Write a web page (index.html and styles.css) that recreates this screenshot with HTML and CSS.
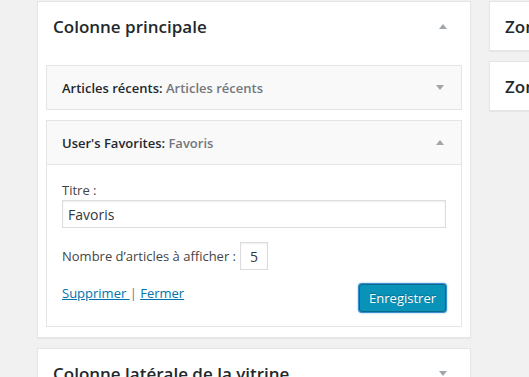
FILE: index.html
```html
<!DOCTYPE html>
<html lang="fr">
<head>
  <meta charset="UTF-8" />
  <title>Widgets</title>
  <link rel="stylesheet" href="styles.css">
</head>
<body>

  <!-- Left column: widget areas -->
  <div class="col-left">
    <div class="sidebar-box">
      <div class="sidebar-name">
        <h2>Colonne principale</h2>
        <span class="arrow up"></span>
      </div>

      <div class="widget">
        <div class="widget-top">
          <span class="widget-title"><strong>Articles récents:</strong> Articles récents</span>
          <span class="arrow down"></span>
        </div>
      </div>

      <div class="widget open">
        <div class="widget-top">
          <span class="widget-title"><strong>User's Favorites:</strong> Favoris</span>
          <span class="arrow up"></span>
        </div>
        <div class="widget-inside">
          <label class="field-label">Titre :</label>
          <input class="text-input" type="text" value="Favoris">
          <div class="number-row">
            <label>Nombre d’articles à afficher :</label>
            <input class="num-input" type="text" value="5">
          </div>
          <div class="control-actions">
            <div class="links">
              <a href="#">Supprimer </a> <span class="sep">|</span> <a href="#">Fermer</a>
            </div>
            <button class="btn-primary">Enregistrer</button>
          </div>
        </div>
      </div>
    </div>

    <div class="sidebar-box">
      <div class="sidebar-name">
        <h2>Colonne latérale de la vitrine</h2>
        <span class="arrow down"></span>
      </div>
    </div>
  </div>

  <!-- Right column -->
  <div class="col-right">
    <div class="sidebar-box small">
      <div class="sidebar-name"><h2>Zone de widgets 1</h2></div>
    </div>
    <div class="sidebar-box small">
      <div class="sidebar-name"><h2>Zone de widgets 2</h2></div>
    </div>
  </div>

</body>
</html>
```

FILE: styles.css
```css
* { box-sizing: border-box; margin: 0; padding: 0; }

body {
  font-family: 'Open Sans', sans-serif;
  background-color: #f1f1f1;
  color: #444;
  display: flex;
  gap: 18px;
  padding: 1px 0 0 37px;
  overflow: hidden;
  height: 377px;
}

.col-left {
  width: 434px;
  flex-shrink: 0;
  display: flex;
  flex-direction: column;
  gap: 10px;
}

.col-right {
  width: 300px;
  flex-shrink: 0;
  display: flex;
  flex-direction: column;
  gap: 10px;
}

.sidebar-box {
  background: white;
  border: 1px solid #e5e5e5;
  box-shadow: 0 1px 1px rgba(0,0,0,0.04);
  padding: 0 8px 10px;
}

.sidebar-box.small {
  height: 50px;
  padding-bottom: 0;
}

.sidebar-name {
  display: flex;
  justify-content: space-between;
  align-items: center;
  height: 49px;
  padding: 0 15px 0 7px;
  margin-bottom: 14px;
}

.sidebar-box.small .sidebar-name {
  height: 48px;
  margin: 0;
}

.sidebar-name h2 {
  font-size: 17px;
  font-weight: 600;
  color: #23282d;
  white-space: nowrap;
}

.arrow {
  width: 0;
  height: 0;
  border-left: 4.5px solid transparent;
  border-right: 4.5px solid transparent;
}

.arrow.up { border-bottom: 5px solid #a0a5aa; }
.arrow.down { border-top: 5px solid #a0a5aa; }

.widget {
  border: 1px solid #e5e5e5;
  background: #f9f9f9;
  margin-bottom: 10px;
}

.widget:last-child { margin-bottom: 0; }

.widget-top {
  display: flex;
  justify-content: space-between;
  align-items: center;
  height: 43px;
  padding: 0 17px 0 15px;
}

.widget-title {
  font-size: 13px;
  font-weight: 600;
  color: #72777c;
}

.widget-title strong {
  color: #23282d;
  font-weight: 600;
}

.widget-inside {
  background: white;
  border-top: 1px solid #e5e5e5;
  padding: 16px 15px 14px;
  font-size: 13px;
}

.field-label {
  display: block;
  line-height: 18px;
  margin-bottom: 1px;
}

.text-input {
  display: block;
  width: 100%;
  height: 28px;
  border: 1px solid #ddd;
  box-shadow: inset 0 1px 2px rgba(0,0,0,0.07);
  font-family: inherit;
  font-size: 14px;
  color: #32373c;
  padding: 0 5px;
  margin-bottom: 14px;
}

.number-row {
  display: flex;
  align-items: center;
  gap: 4px;
  margin-bottom: 13px;
}

.num-input {
  width: 28px;
  height: 28px;
  border: 1px solid #ddd;
  box-shadow: inset 0 1px 2px rgba(0,0,0,0.07);
  font-family: inherit;
  font-size: 14px;
  color: #32373c;
  text-align: center;
}

.control-actions {
  display: flex;
  justify-content: space-between;
  align-items: flex-start;
}

.links {
  padding-top: 1px;
}

.links a {
  color: #0073aa;
  text-decoration: underline;
}

.sep { color: #72777c; }

.btn-primary {
  margin-top: 1px;
  background: #0a93b8;
  border: 1px solid #0a6a8c;
  border-radius: 3px;
  color: white;
  font-family: inherit;
  font-size: 13px;
  height: 28px;
  padding: 0 9px;
  box-shadow: 0 0 0 1px #3d8ed0, 0 0 2px 1px rgba(30,140,190,0.6);
  text-shadow: 0 -1px 1px #0a6a8c;
}
```
